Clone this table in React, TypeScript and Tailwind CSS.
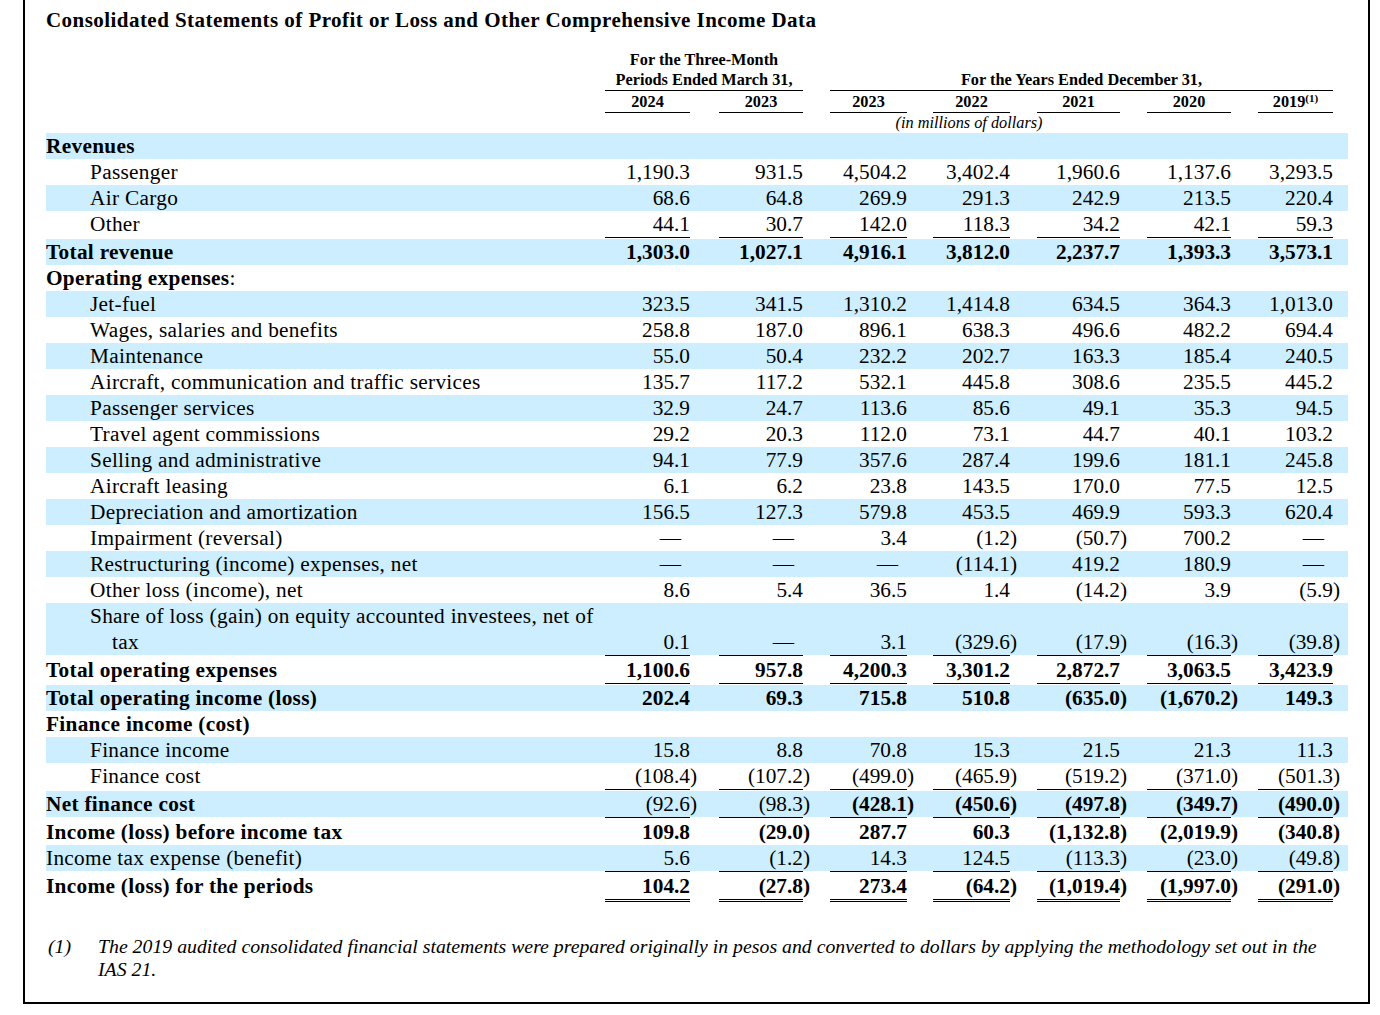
import React from "react";

const cols =
  "grid grid-cols-[559px_85px_29px_84px_27px_77px_26px_77px_27px_83px_27px_84px_27px_75px_15px] w-[1302px]";

type RowDef = {
  label: React.ReactNode;
  vals?: string[];
  bold?: boolean;
  boldVals?: boolean[] | boolean;
  band?: boolean;
  indent?: boolean;
  rule?: boolean;
  double?: boolean;
  twoLine?: boolean;
};

const rows: RowDef[] = [
  { label: "Revenues", bold: true, band: true },
  { label: "Passenger", indent: true, vals: ["1,190.3", "931.5", "4,504.2", "3,402.4", "1,960.6", "1,137.6", "3,293.5"] },
  { label: "Air Cargo", indent: true, band: true, vals: ["68.6", "64.8", "269.9", "291.3", "242.9", "213.5", "220.4"] },
  { label: "Other", indent: true, vals: ["44.1", "30.7", "142.0", "118.3", "34.2", "42.1", "59.3"] },
  { label: "Total revenue", bold: true, band: true, rule: true, boldVals: true, vals: ["1,303.0", "1,027.1", "4,916.1", "3,812.0", "2,237.7", "1,393.3", "3,573.1"] },
  { label: (<><span className="font-bold">Operating expenses</span>:</>) },
  { label: "Jet-fuel", indent: true, band: true, vals: ["323.5", "341.5", "1,310.2", "1,414.8", "634.5", "364.3", "1,013.0"] },
  { label: "Wages, salaries and benefits", indent: true, vals: ["258.8", "187.0", "896.1", "638.3", "496.6", "482.2", "694.4"] },
  { label: "Maintenance", indent: true, band: true, vals: ["55.0", "50.4", "232.2", "202.7", "163.3", "185.4", "240.5"] },
  { label: "Aircraft, communication and traffic services", indent: true, vals: ["135.7", "117.2", "532.1", "445.8", "308.6", "235.5", "445.2"] },
  { label: "Passenger services", indent: true, band: true, vals: ["32.9", "24.7", "113.6", "85.6", "49.1", "35.3", "94.5"] },
  { label: "Travel agent commissions", indent: true, vals: ["29.2", "20.3", "112.0", "73.1", "44.7", "40.1", "103.2"] },
  { label: "Selling and administrative", indent: true, band: true, vals: ["94.1", "77.9", "357.6", "287.4", "199.6", "181.1", "245.8"] },
  { label: "Aircraft leasing", indent: true, vals: ["6.1", "6.2", "23.8", "143.5", "170.0", "77.5", "12.5"] },
  { label: "Depreciation and amortization", indent: true, band: true, vals: ["156.5", "127.3", "579.8", "453.5", "469.9", "593.3", "620.4"] },
  { label: "Impairment (reversal)", indent: true, vals: ["—", "—", "3.4", "(1.2)", "(50.7)", "700.2", "—"] },
  { label: "Restructuring (income) expenses, net", indent: true, band: true, vals: ["—", "—", "—", "(114.1)", "419.2", "180.9", "—"] },
  { label: "Other loss (income), net", indent: true, vals: ["8.6", "5.4", "36.5", "1.4", "(14.2)", "3.9", "(5.9)"] },
  { label: "Share of loss (gain) on equity accounted investees, net of tax", indent: true, band: true, twoLine: true, vals: ["0.1", "—", "3.1", "(329.6)", "(17.9)", "(16.3)", "(39.8)"] },
  { label: "Total operating expenses", bold: true, rule: true, boldVals: true, vals: ["1,100.6", "957.8", "4,200.3", "3,301.2", "2,872.7", "3,063.5", "3,423.9"] },
  { label: "Total operating income (loss)", bold: true, band: true, rule: true, boldVals: true, vals: ["202.4", "69.3", "715.8", "510.8", "(635.0)", "(1,670.2)", "149.3"] },
  { label: "Finance income (cost)", bold: true },
  { label: "Finance income", indent: true, band: true, vals: ["15.8", "8.8", "70.8", "15.3", "21.5", "21.3", "11.3"] },
  { label: "Finance cost", indent: true, vals: ["(108.4)", "(107.2)", "(499.0)", "(465.9)", "(519.2)", "(371.0)", "(501.3)"] },
  { label: "Net finance cost", bold: true, band: true, rule: true, boldVals: [false, false, true, true, true, true, true], vals: ["(92.6)", "(98.3)", "(428.1)", "(450.6)", "(497.8)", "(349.7)", "(490.0)"] },
  { label: "Income (loss) before income tax", bold: true, rule: true, boldVals: true, vals: ["109.8", "(29.0)", "287.7", "60.3", "(1,132.8)", "(2,019.9)", "(340.8)"] },
  { label: "Income tax expense (benefit)", band: true, vals: ["5.6", "(1.2)", "14.3", "124.5", "(113.3)", "(23.0)", "(49.8)"] },
  { label: "Income (loss) for the periods", bold: true, rule: true, double: true, boldVals: true, vals: ["104.2", "(27.8)", "273.4", "(64.2)", "(1,019.4)", "(1,997.0)", "(291.0)"] },
];

const idx = [0, 1, 2, 3, 4, 5, 6];

function RuleStrip() {
  return (
    <div className={`${cols} h-[2px]`}>
      <div />
      {idx.map((i) => (
        <React.Fragment key={i}>
          <div className="border-t border-black" />
          <div />
        </React.Fragment>
      ))}
    </div>
  );
}

function DoubleStrip() {
  return (
    <div className={`${cols} h-[4px]`}>
      <div />
      {idx.map((i) => (
        <React.Fragment key={i}>
          <div className="border-t-[3px] border-double border-black" />
          <div />
        </React.Fragment>
      ))}
    </div>
  );
}

function Row({ r }: { r: RowDef }) {
  const isBold = (i: number) =>
    Array.isArray(r.boldVals) ? r.boldVals[i] : !!r.boldVals;
  return (
    <>
      {r.rule && <RuleStrip />}
      <div className={`${cols} ${r.band ? "bg-[#cceeff]" : ""} leading-[26px]`}>
        <div
          className={`tracking-[0.3px] ${r.indent ? (r.twoLine ? "pl-[66px] -indent-[22px]" : "pl-[44px]") : ""} ${r.bold ? "font-bold" : ""} ${r.twoLine ? "pr-[6px]" : "whitespace-nowrap"}`}
        >
          {r.label}
        </div>
        {idx.map((i) => {
          const v = r.vals ? r.vals[i] : "";
          const neg = v.endsWith(")");
          const dash = v === "—";
          const b = isBold(i) ? "font-bold" : "";
          return (
            <React.Fragment key={i}>
              <div className={`text-right whitespace-nowrap self-end ${b} ${dash ? "pr-[9px]" : ""}`}>
                {neg ? v.slice(0, -1) : v}
              </div>
              <div className={`whitespace-nowrap self-end ${b}`}>{neg ? ")" : ""}</div>
            </React.Fragment>
          );
        })}
      </div>
      {r.double && <DoubleStrip />}
    </>
  );
}

export default function App() {
  const years = ["2024", "2023", "2023", "2022", "2021", "2020"];
  return (
    <div className="w-[1380px] h-[1015px] bg-white text-black font-['Liberation_Serif','Times_New_Roman',serif]">
      <div className="ml-[23px] w-[1347px] h-[1004px] border-x-2 border-b-2 border-black pl-[21px]">
        <div className="pt-[8px] text-[21px] leading-[24px] font-bold whitespace-nowrap tracking-[0.45px]">
          Consolidated Statements of Profit or Loss and Other Comprehensive Income Data
        </div>

        <div className={`${cols} mt-[18px] text-[16.3px] leading-[20px] font-bold`}>
          <div className="col-start-2 col-end-5 text-center whitespace-nowrap">For the Three-Month</div>
        </div>
        <div className={`${cols} text-[16.3px] leading-[20px] font-bold`}>
          <div className="col-start-2 col-end-5 text-center whitespace-nowrap border-b border-black">
            Periods Ended March 31,
          </div>
          <div className="col-start-6 col-end-15 text-center whitespace-nowrap border-b border-black">
            For the Years Ended December 31,
          </div>
        </div>
        <div className={`${cols} text-[16.3px] leading-[20px] font-bold pt-[1px]`}>
          <div />
          {years.map((y, i) => (
            <React.Fragment key={i}>
              <div className="text-center border-b border-black">{y}</div>
              <div />
            </React.Fragment>
          ))}
          <div className="text-center border-b border-black whitespace-nowrap">
            2019<span className="text-[11px] leading-none align-[5px] font-bold">(1)</span>
          </div>
          <div />
        </div>
        <div className={`${cols} text-[16.3px] leading-[20px] italic`}>
          <div className="col-start-2 col-end-15 text-center">(in millions of dollars)</div>
        </div>

        <div className="text-[21.3px] w-[1302px]">
          {rows.map((r, i) => (
            <Row key={i} r={r} />
          ))}
        </div>

        <div className="mt-[32px] flex text-[19.8px] leading-[23px] italic">
          <div className="w-[52px] pl-[2px] shrink-0">(1)</div>
          <div className="w-[1235px]">
            The 2019 audited consolidated financial statements were prepared originally in pesos and converted to dollars by applying the methodology set out in the IAS 21.
          </div>
        </div>
      </div>
    </div>
  );
}
